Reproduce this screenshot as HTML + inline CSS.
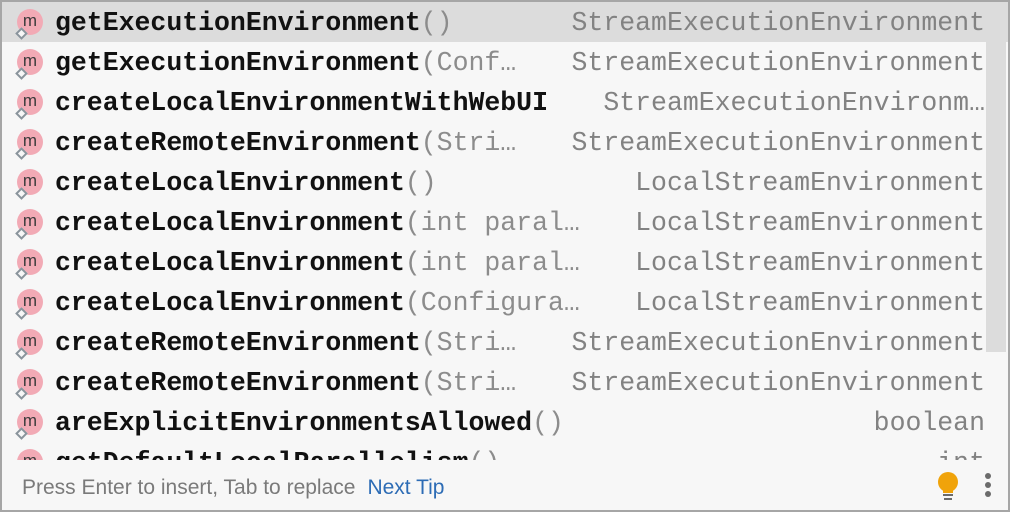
<!DOCTYPE html>
<html><head><style>
html,body{margin:0;padding:0}
body{width:1010px;height:512px;overflow:hidden;background:#f7f7f7;position:relative;font-family:"Liberation Mono",monospace}
.frame{position:absolute;left:0;top:0;width:1006px;height:508px;border:2px solid #a6a6a6;}
.list{position:absolute;left:2px;top:2px;width:1006px;height:458px;overflow:hidden}
.row{position:absolute;left:0;width:1006px;height:40px}
.sel{background:#dcdcdc}
.ic{position:absolute;left:15px;top:7px;width:26px;height:26px;border-radius:50%;background:#f2aab5;font:17px "Liberation Sans",sans-serif;color:#3a3a3a;text-align:center;line-height:24px}
.dm{position:absolute;left:15px;top:27px;width:5px;height:5px;border:2px solid #8a949c;transform:rotate(45deg);background:#f7f7f7}
.nm{position:absolute;left:53px;top:1px;line-height:40px;font-size:26.5px;white-space:nowrap;color:#111}
.nm b{font-weight:bold}
.nm span{color:#8c8c8c}
.ty{position:absolute;right:23px;top:1px;line-height:40px;font-size:26.5px;color:#828282;white-space:nowrap}
.sb{position:absolute;left:986px;top:2px;width:20px;height:350px;background:#dcdcdc}
.foot{position:absolute;left:22px;top:476px;font:21px "Liberation Sans",sans-serif;color:#7a7a7a}
.foot a{color:#2d6cb5;margin-left:12px;text-decoration:none}
</style></head><body>
<div class="list">
<div class="row sel" style="top:0"><div class="ic">m</div><div class="dm"></div><div class="nm"><b>getExecutionEnvironment</b><span>()</span></div><div class="ty">StreamExecutionEnvironment</div></div>
<div class="row" style="top:40px"><div class="ic">m</div><div class="dm"></div><div class="nm"><b>getExecutionEnvironment</b><span>(Conf…</span></div><div class="ty">StreamExecutionEnvironment</div></div>
<div class="row" style="top:80px"><div class="ic">m</div><div class="dm"></div><div class="nm"><b>createLocalEnvironmentWithWebUI</b></div><div class="ty">StreamExecutionEnvironm…</div></div>
<div class="row" style="top:120px"><div class="ic">m</div><div class="dm"></div><div class="nm"><b>createRemoteEnvironment</b><span>(Stri…</span></div><div class="ty">StreamExecutionEnvironment</div></div>
<div class="row" style="top:160px"><div class="ic">m</div><div class="dm"></div><div class="nm"><b>createLocalEnvironment</b><span>()</span></div><div class="ty">LocalStreamEnvironment</div></div>
<div class="row" style="top:200px"><div class="ic">m</div><div class="dm"></div><div class="nm"><b>createLocalEnvironment</b><span>(int paral…</span></div><div class="ty">LocalStreamEnvironment</div></div>
<div class="row" style="top:240px"><div class="ic">m</div><div class="dm"></div><div class="nm"><b>createLocalEnvironment</b><span>(int paral…</span></div><div class="ty">LocalStreamEnvironment</div></div>
<div class="row" style="top:280px"><div class="ic">m</div><div class="dm"></div><div class="nm"><b>createLocalEnvironment</b><span>(Configura…</span></div><div class="ty">LocalStreamEnvironment</div></div>
<div class="row" style="top:320px"><div class="ic">m</div><div class="dm"></div><div class="nm"><b>createRemoteEnvironment</b><span>(Stri…</span></div><div class="ty">StreamExecutionEnvironment</div></div>
<div class="row" style="top:360px"><div class="ic">m</div><div class="dm"></div><div class="nm"><b>createRemoteEnvironment</b><span>(Stri…</span></div><div class="ty">StreamExecutionEnvironment</div></div>
<div class="row" style="top:400px"><div class="ic">m</div><div class="dm"></div><div class="nm"><b>areExplicitEnvironmentsAllowed</b><span>()</span></div><div class="ty">boolean</div></div>
<div class="row" style="top:440px"><div class="ic">m</div><div class="dm"></div><div class="nm"><b>getDefaultLocalParallelism</b><span>()</span></div><div class="ty">int</div></div>
</div>
<div class="sb"></div>
<div class="foot">Press Enter to insert, Tab to replace<a>Next Tip</a></div>
<svg style="position:absolute;left:934px;top:470px" width="60" height="32">
<circle cx="14" cy="12" r="10" fill="#f0a30a"/><rect x="9" y="17" width="10" height="6" fill="#f0a30a"/>
<rect x="9" y="24" width="10" height="2" fill="#6b6b6b"/><rect x="10" y="28" width="8" height="2" fill="#6b6b6b"/>
<circle cx="54" cy="6" r="3" fill="#6b6b6b"/><circle cx="54" cy="15" r="3" fill="#6b6b6b"/><circle cx="54" cy="24" r="3" fill="#6b6b6b"/>
</svg>
<div class="frame"></div>
</body></html>
